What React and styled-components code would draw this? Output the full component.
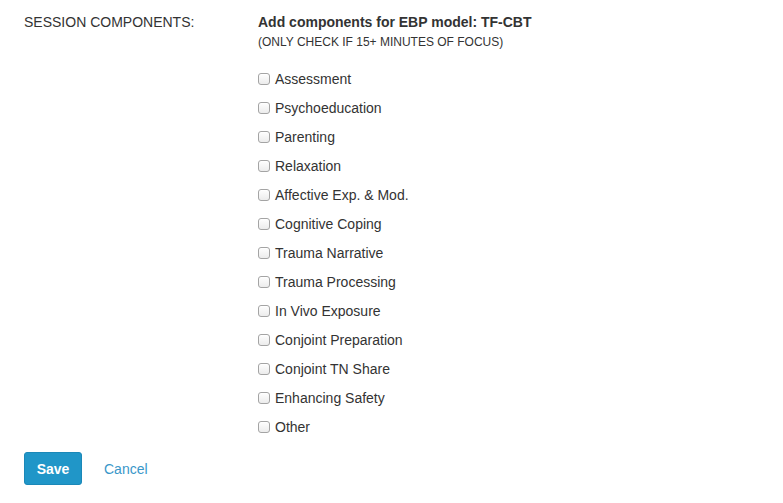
import React from 'react'
import styled, { createGlobalStyle } from 'styled-components'

const GlobalStyle = createGlobalStyle`
  body {
    margin: 0;
    background: #fff;
    font-family: "Liberation Sans", Arial, sans-serif;
    color: #333;
  }
`

const components = [
  'Assessment',
  'Psychoeducation',
  'Parenting',
  'Relaxation',
  'Affective Exp. & Mod.',
  'Cognitive Coping',
  'Trauma Narrative',
  'Trauma Processing',
  'In Vivo Exposure',
  'Conjoint Preparation',
  'Conjoint TN Share',
  'Enhancing Safety',
  'Other',
]

function App() {
  return (
    <Page>
      <GlobalStyle />
      <FormRow>
        <Label>SESSION COMPONENTS:</Label>
        <Field>
          <Heading>Add components for EBP model: TF-CBT</Heading>
          <Note>(ONLY CHECK IF 15+ MINUTES OF FOCUS)</Note>
          <List>
            {components.map((name) => (
              <Option key={name}>
                <Box type="checkbox" />
                <span>{name}</span>
              </Option>
            ))}
          </List>
        </Field>
      </FormRow>
      <Actions>
        <SaveButton>Save</SaveButton>
        <CancelLink href="#">Cancel</CancelLink>
      </Actions>
    </Page>
  )
}

const Page = styled.div`
  padding: 12px 24px 0 24px;
`
const FormRow = styled.div`
  display: flex;
`
const Label = styled.div`
  width: 234px;
  flex-shrink: 0;
  font-size: 14px;
  line-height: 20px;
`
const Field = styled.div`
  display: flex;
  flex-direction: column;
`
const Heading = styled.div`
  font-size: 14px;
  font-weight: bold;
  line-height: 20px;
`
const Note = styled.div`
  font-size: 12px;
  line-height: 16px;
  margin-top: 2px;
`
const List = styled.div`
  margin-top: 14px;
  display: flex;
  flex-direction: column;
`
const Option = styled.label`
  display: flex;
  align-items: center;
  height: 29px;
  font-size: 14px;
  gap: 5px;
`
const Box = styled.input`
  appearance: none;
  margin: 0;
  width: 12px;
  height: 12px;
  border: 1px solid #a4a4a4;
  border-radius: 3px;
  background: linear-gradient(#fefefe, #ececec);
  box-shadow: inset 0 1px 0 #fff;
  box-sizing: border-box;
`
const Actions = styled.div`
  display: flex;
  align-items: center;
  gap: 22px;
  margin-top: 11px;
`
const SaveButton = styled.button`
  width: 58px;
  height: 33px;
  border: 1px solid #1b88b8;
  border-radius: 3px;
  background: #2096c8;
  color: #fff;
  font-family: "Liberation Sans", Arial, sans-serif;
  font-size: 14px;
  font-weight: bold;
  padding: 0;
`
const CancelLink = styled.a`
  color: #3a97c9;
  font-size: 14px;
  text-decoration: none;
`

export default App
